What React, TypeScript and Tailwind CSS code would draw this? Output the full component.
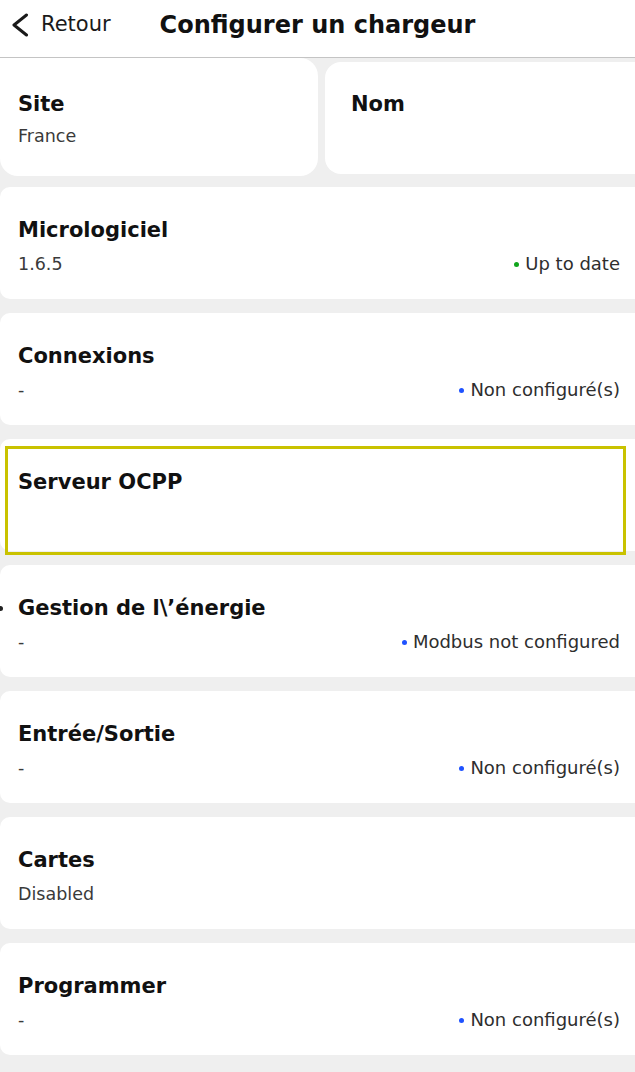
type Status = {
  color: "green" | "blue";
  label: string;
};

type Section = {
  title: string;
  value?: string;
  status?: Status;
  focused?: boolean;
  bullet?: boolean;
};

const sections: Section[] = [
  { title: "Micrologiciel", value: "1.6.5", status: { color: "green", label: "Up to date" } },
  { title: "Connexions", value: "-", status: { color: "blue", label: "Non configuré(s)" } },
  { title: "Serveur OCPP", focused: true },
  {
    title: "Gestion de l\\’énergie",
    value: "-",
    status: { color: "blue", label: "Modbus not configured" },
    bullet: true,
  },
  { title: "Entrée/Sortie", value: "-", status: { color: "blue", label: "Non configuré(s)" } },
  { title: "Cartes", value: "Disabled" },
  { title: "Programmer", value: "-", status: { color: "blue", label: "Non configuré(s)" } },
];

function StatusTag({ status }: { status: Status }) {
  return (
    <span className="flex items-center gap-[6px] text-[18px] leading-6 text-[#2e2e2e]">
      <span
        className={`inline-block h-[5px] w-[5px] rounded-full ${
          status.color === "green" ? "bg-[#10a51c]" : "bg-[#1f52ff]"
        }`}
      />
      {status.label}
    </span>
  );
}

function SectionCard({ section }: { section: Section }) {
  return (
    <div className="relative h-[112px] rounded-l-[10px] bg-white pl-[18px] pr-[15px] pt-[29px]">
      {section.bullet && (
        <span className="absolute left-[-2px] top-[41px] h-[5px] w-[5px] rounded-full bg-[#222]" />
      )}
      {section.focused && (
        <div className="absolute left-[5px] right-[9px] top-[7px] h-[109px] border-[3px] border-[#c9c200]" />
      )}
      <div className="text-[21px] font-bold leading-7 text-[#111]">{section.title}</div>
      {(section.value || section.status) && (
        <div className="mt-[8px] flex items-center justify-between">
          <span className="text-[17.5px] leading-6 text-[#3a3a3a]">{section.value}</span>
          {section.status && <StatusTag status={section.status} />}
        </div>
      )}
    </div>
  );
}

export default function App() {
  return (
    <div
      className="min-h-[1072px] overflow-hidden bg-[#efefef]"
      style={{ fontFamily: '"DejaVu Sans", "Noto Sans", sans-serif' }}
    >
      {/* header */}
      <div className="flex h-[58px] items-center border-b border-[#c4c4c4] bg-white pb-[7px]">
        <button className="flex items-center pl-[12px] text-[21px] text-[#1a1a1a]">
          <svg width="17" height="24" viewBox="0 0 17 24" fill="none" stroke="currentColor" strokeWidth="3" strokeLinecap="round" strokeLinejoin="round">
            <polyline points="14.5,2 2,12 14.5,22" />
          </svg>
          <span className="ml-[12px]">Retour</span>
        </button>
        <h1 className="ml-[49px] text-[24px] font-bold text-[#111]">Configurer un chargeur</h1>
      </div>

      {/* site / nom */}
      <div className="flex items-start gap-[7px]">
        <div className="h-[118px] w-[318px] shrink-0 rounded-b-[18px] rounded-tr-[18px] bg-white pl-[18px] pt-[32px]">
          <div className="text-[21px] font-bold leading-7 text-[#111]">Site</div>
          <div className="mt-[6px] text-[17.5px] leading-6 text-[#3a3a3a]">France</div>
        </div>
        <div className="mt-[4px] h-[112px] flex-1 rounded-l-[16px] bg-white pl-[26px] pt-[28px]">
          <div className="text-[21px] font-bold leading-7 text-[#111]">Nom</div>
        </div>
      </div>

      {/* sections */}
      <div className="mt-[11px] flex flex-col gap-[14px]">
        {sections.map((s) => (
          <SectionCard key={s.title} section={s} />
        ))}
      </div>
    </div>
  );
}
